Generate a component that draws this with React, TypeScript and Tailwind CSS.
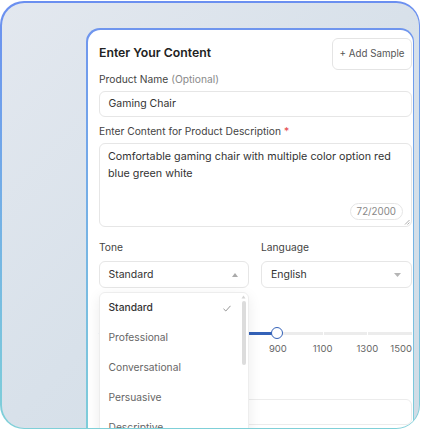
import React from "react";

const tones = ["Standard", "Professional", "Conversational", "Persuasive", "Descriptive"];
const marks = [900, 1100, 1300, 1500];
const MIN = 100;
const MAX = 1500;
const VALUE = 900;
const pct = (v: number) => ((v - MIN) / (MAX - MIN)) * 100;

export default function App() {
  return (
    <div
      className="w-[421px] h-[430px] bg-white pt-[1px] overflow-hidden"
      style={{ fontFamily: "Inter, 'Noto Sans', sans-serif" }}
    >
      <div className="w-[420px] h-[428px] rounded-[24px] p-[1.5px] bg-gradient-to-b from-[#6b8ff0] to-[#7fd0d8]">
        <div className="w-full h-full rounded-[22.5px] overflow-hidden bg-gradient-to-br from-[#e3e8ef] via-[#d8e1ea] to-[#d0dce6] pl-[84.5px] pt-[25.5px]">
          <div className="w-[328px] h-[420px] rounded-[14px] p-[1.5px] bg-gradient-to-b from-[#6f95ee] to-[#7fd0d8]">
            <div className="w-full h-full rounded-[12.5px] bg-white overflow-hidden pl-[11.5px] pr-[0.5px] pt-[8.5px] text-[#333]">
              {/* header */}
              <div className="flex items-start justify-between">
                <div className="mt-[5.5px] text-[12.25px] leading-[18px] font-semibold text-[#222]">
                  Enter Your Content
                </div>
                <button className="w-[80px] h-[32px] rounded-[6px] border border-[#e4e4e4] bg-white text-[9.75px] text-[#555] flex items-center justify-center">
                  + Add Sample
                </button>
              </div>

              <div className="mt-[2px] text-[10.25px] leading-[14px] text-[#444]">
                Product Name <span className="text-[#8a8a8a]">(Optional)</span>
              </div>
              <div className="mt-[5px] h-[26px] rounded-[6px] border border-[#e6e6e6] flex items-center pl-[8.5px] text-[10.5px] text-[#333]">
                Gaming Chair
              </div>

              <div className="mt-[7px] text-[10.25px] leading-[14px] text-[#444]">
                Enter Content for Product Description <span className="text-[#e5484d]">*</span>
              </div>
              <div className="relative mt-[5px] h-[84px] rounded-[6px] border border-[#e6e6e6] pl-[8px] pr-[12px] pt-[4px] text-[10.75px] leading-[17px] text-[#333]">
                Comfortable gaming chair with multiple color option red blue green white
                <div className="absolute right-[8px] bottom-[6px] h-[17px] px-[6px] rounded-full border border-[#e6e6e6] bg-white flex items-center text-[9.75px] text-[#888]">
                  72/2000
                </div>
                <svg className="absolute right-[1px] bottom-[1px]" width="6" height="6" viewBox="0 0 6 6">
                  <path d="M1 5.5 L5.5 1 M3.5 5.5 L5.5 3.5" stroke="#999" strokeWidth="0.8" />
                </svg>
              </div>

              {/* tone & language */}
              <div className="relative mt-[13px] grid grid-cols-[150px_151px] gap-x-[12px]">
                <div className="text-[10.25px] leading-[14px] text-[#444]">Tone</div>
                <div className="text-[10.25px] leading-[14px] text-[#444]">Language</div>
                <div className="mt-[7px] h-[27px] rounded-[6px] border border-[#e6e6e6] flex items-center justify-between pl-[8.5px] pr-[10px] text-[10.5px] text-[#333]">
                  <span>Standard</span>
                  <svg width="6" height="4" viewBox="0 0 6 4">
                    <path d="M3 0 L6 4 L0 4 Z" fill="#aaa" />
                  </svg>
                </div>
                <div className="mt-[7px] h-[27px] rounded-[6px] border border-[#e6e6e6] flex items-center justify-between pl-[9px] pr-[10px] text-[10.5px] text-[#333]">
                  <span>English</span>
                  <svg width="7" height="4" viewBox="0 0 7 4">
                    <path d="M0 0 L7 0 L3.5 4 Z" fill="#b5b5b5" />
                  </svg>
                </div>

                {/* dropdown menu */}
                <div className="absolute left-0 top-[52px] z-10 w-[150px] h-[160px] rounded-[6px] border border-[#ededed] bg-white shadow-[0_4px_14px_rgba(0,0,0,0.08)]">
                  {tones.map((t, i) => (
                    <div
                      key={t}
                      className={`h-[30px] flex items-center justify-between pl-[8.5px] pr-[17px] text-[10.25px] ${
                        i === 0 ? "text-[#333] font-medium" : "text-[#666]"
                      }`}
                    >
                      <span>{t}</span>
                      {i === 0 && (
                        <svg width="8" height="7" viewBox="0 0 8 7">
                          <path d="M0.5 3.8 L2.8 6 L7.5 0.8" fill="none" stroke="#888" strokeWidth="0.9" />
                        </svg>
                      )}
                    </div>
                  ))}
                  <div className="absolute right-[2px] top-[2px] flex flex-col items-center">
                    <svg width="5" height="4" viewBox="0 0 5 4">
                      <path d="M2.5 0.5 L4.5 3.5 L0.5 3.5 Z" fill="#d4d4d4" />
                    </svg>
                    <div className="mt-[2px] w-[4px] h-[64px] rounded-full bg-[#dcdcdc]" />
                  </div>
                </div>
              </div>

              {/* slider */}
              <div className="relative mt-[39px] h-[12px]">
                <div className="absolute left-0 right-0 top-[4.5px] h-[3.5px] bg-[#ececec]" />
                <div
                  className="absolute left-0 top-[4.5px] h-[3.5px] bg-[#3462b8] rounded-l-full"
                  style={{ width: `${pct(VALUE)}%` }}
                />
                {[1100, 1300].map((m) => (
                  <div
                    key={m}
                    className="absolute top-[4px] w-[1px] h-[4.5px] bg-white"
                    style={{ left: `${pct(m)}%` }}
                  />
                ))}
                <div
                  className="absolute top-0 w-[12px] h-[12px] -ml-[6px] rounded-full border-[1.5px] border-[#3462b8] bg-white"
                  style={{ left: `${pct(VALUE) - 0.3}%` }}
                />
              </div>
              <div className="relative mt-[4px] h-[12px] text-[9.5px] leading-[12px] text-[#666]">
                {marks.map((m) => (
                  <span
                    key={m}
                    className={`absolute top-0 ${m === MAX ? "-translate-x-full" : "-translate-x-1/2"}`}
                    style={{ left: `${pct(m)}%` }}
                  >
                    {m}
                  </span>
                ))}
              </div>

              <div className="mt-[44px] h-[26px] rounded-[6px] border border-[#ececec]" />
            </div>
          </div>
        </div>
      </div>
    </div>
  );
}
